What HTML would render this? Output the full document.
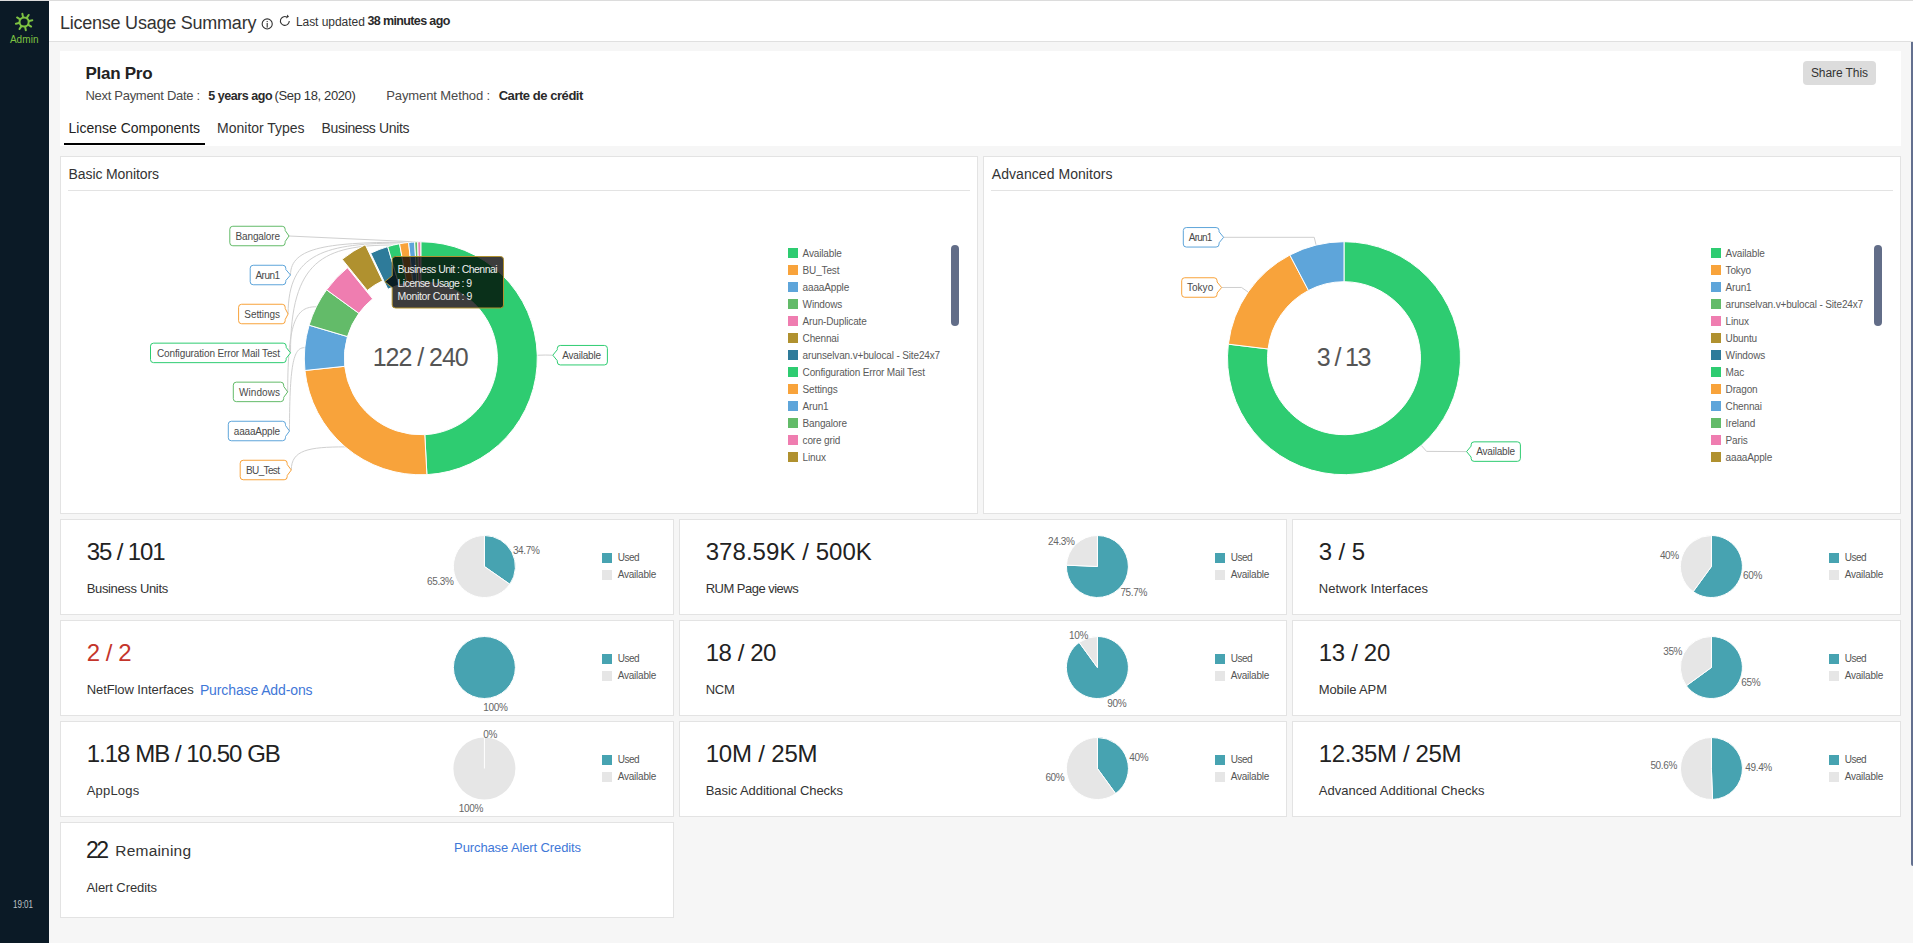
<!DOCTYPE html><html><head><meta charset="utf-8"><title>License Usage Summary</title><style>
*{margin:0;padding:0;box-sizing:border-box}
html,body{width:1913px;height:943px;overflow:hidden;background:#f6f6f6;font-family:"Liberation Sans",sans-serif}
.t{position:absolute;white-space:nowrap;line-height:1}
.a{position:absolute}
.card{position:absolute;background:#fff;border:1px solid #e3e3e3}
svg{position:absolute;left:0;top:0}
</style></head><body>
<div class="a" style="left:0;top:0;width:1913px;height:1px;background:#dcdcdc"></div>
<div class="a" style="left:0;top:1px;width:49px;height:942px;background:#0b1a26"></div>
<div class="a" style="left:49px;top:1px;width:1864px;height:40px;background:#fff"></div>
<div class="a" style="left:49px;top:41px;width:1864px;height:1px;background:#e0e0e0"></div>
<div class="a" style="left:1911px;top:42px;width:2px;height:824px;background:#63708f;border-radius:0 0 0 2px"></div>
<svg width="49" height="60" style="left:0;top:0"><g transform="translate(24.1,22)"><line x1="-1.08" y1="-5.09" x2="-1.75" y2="-8.22" stroke="#7dc242" stroke-width="2.0" stroke-linecap="round"/><line x1="2.83" y1="-4.36" x2="4.57" y2="-7.04" stroke="#7dc242" stroke-width="2.0" stroke-linecap="round"/><line x1="5.09" y1="-1.08" x2="8.22" y2="-1.75" stroke="#7dc242" stroke-width="2.0" stroke-linecap="round"/><line x1="4.36" y1="2.83" x2="7.04" y2="4.57" stroke="#7dc242" stroke-width="2.0" stroke-linecap="round"/><line x1="1.08" y1="5.09" x2="1.75" y2="8.22" stroke="#7dc242" stroke-width="2.0" stroke-linecap="round"/><line x1="-2.83" y1="4.36" x2="-4.57" y2="7.04" stroke="#7dc242" stroke-width="2.0" stroke-linecap="round"/><line x1="-5.09" y1="1.08" x2="-8.22" y2="1.75" stroke="#7dc242" stroke-width="2.0" stroke-linecap="round"/><line x1="-4.36" y1="-2.83" x2="-7.04" y2="-4.57" stroke="#7dc242" stroke-width="2.0" stroke-linecap="round"/><circle r="4.6" fill="none" stroke="#7dc242" stroke-width="2.0"/></g></svg>
<div class="t" style="left:9.90px;top:35.24px;font-size:10px;color:#7dc242;letter-spacing:0.062px;">Admin</div>
<div class="t" style="left:13.10px;top:900.24px;font-size:10px;color:#bfc3c7;transform:scaleX(0.8);transform-origin:0 0;">19:01</div>
<div class="t" style="left:59.90px;top:14.16px;font-size:18px;color:#333;letter-spacing:-0.228px;">License Usage Summary</div>
<svg width="60" height="42" style="left:255px;top:0"><circle cx="12.2" cy="23.9" r="5.05" fill="none" stroke="#333" stroke-width="1.1"/><rect x="11.65" y="23.0" width="1.1" height="4.6" fill="#333"/><rect x="11.65" y="21.0" width="1.1" height="1.1" fill="#333"/><path d="M31.7,16.9 A4.45,4.45 0 1 0 34.3,21.1" fill="none" stroke="#333" stroke-width="1.1"/><path d="M32.4,14.6 L34.0,16.7 L31.0,18.5 Z" fill="#333"/></svg>
<div class="t" style="left:295.90px;top:16.04px;font-size:12px;color:#333;letter-spacing:-0.038px;">Last updated</div>
<div class="t" style="left:367.40px;top:15.42px;font-size:12.5px;color:#2a2a2a;font-weight:700;letter-spacing:-0.623px;">38 minutes ago</div>
<div class="a" style="left:60px;top:51px;width:1841px;height:95px;background:#fff"></div>
<div class="t" style="left:85.40px;top:64.91px;font-size:17px;color:#222;font-weight:700;letter-spacing:-0.248px;">Plan Pro</div>
<div class="t" style="left:85.40px;top:89.40px;font-size:13px;color:#4a4a4a;letter-spacing:-0.285px;">Next Payment Date :</div>
<div class="t" style="left:208.30px;top:89.62px;font-size:12.5px;color:#2a2a2a;font-weight:700;letter-spacing:-0.451px;">5 years ago</div>
<div class="t" style="left:274.50px;top:89.40px;font-size:13px;color:#333;letter-spacing:-0.361px;">(Sep 18, 2020)</div>
<div class="t" style="left:386.20px;top:89.40px;font-size:13px;color:#4a4a4a;letter-spacing:-0.100px;">Payment Method :</div>
<div class="t" style="left:498.70px;top:89.00px;font-size:13px;color:#2a2a2a;font-weight:700;letter-spacing:-0.455px;">Carte de crédit</div>
<div class="a" style="left:1803px;top:61px;width:73px;height:24px;background:#dcdcdc;border-radius:4px"></div>
<div class="t" style="left:1810.90px;top:67.44px;font-size:12px;color:#333;letter-spacing:-0.071px;">Share This</div>
<div class="t" style="left:68.50px;top:121.05px;font-size:14px;color:#222;">License Components</div>
<div class="t" style="left:217.10px;top:121.05px;font-size:14px;color:#333;letter-spacing:-0.012px;">Monitor Types</div>
<div class="t" style="left:321.60px;top:121.05px;font-size:14px;color:#333;letter-spacing:-0.362px;">Business Units</div>
<div class="a" style="left:64px;top:143px;width:141px;height:2px;background:#000"></div>
<div class="card" style="left:60px;top:156px;width:918px;height:358px"></div>
<div class="card" style="left:983px;top:156px;width:918px;height:358px"></div>
<div class="t" style="left:68.60px;top:167.05px;font-size:14px;color:#333;letter-spacing:-0.111px;">Basic Monitors</div>
<div class="t" style="left:991.80px;top:167.05px;font-size:14px;color:#333;letter-spacing:0.054px;">Advanced Monitors</div>
<div class="a" style="left:68px;top:190px;width:902px;height:1px;background:#e3e3e3"></div>
<div class="a" style="left:991px;top:190px;width:902px;height:1px;background:#e3e3e3"></div>
<svg width="1913" height="943" style="left:0;top:0"><path d="M289.00,236.00 L416.23,241.89" fill="none" stroke="#d0d0d0" stroke-width="1"/><path d="M290.50,275.00 C290.50,246.76 329.27,242.16 411.66,242.16" fill="none" stroke="#d0d0d0" stroke-width="1"/><path d="M288.10,314.00 C288.10,252.94 325.21,243.01 404.08,243.01" fill="none" stroke="#d0d0d0" stroke-width="1"/><path d="M290.50,352.90 C290.50,260.12 323.49,245.02 393.60,245.02" fill="none" stroke="#d0d0d0" stroke-width="1"/><path d="M287.70,391.90 C287.70,318.69 296.86,306.77 316.31,306.77" fill="none" stroke="#d0d0d0" stroke-width="1"/><path d="M289.50,431.00 C289.50,359.31 294.39,347.64 304.79,347.64" fill="none" stroke="#d0d0d0" stroke-width="1"/><path d="M291.30,470.00 C291.30,450.12 308.53,446.89 345.14,446.89" fill="none" stroke="#d0d0d0" stroke-width="1"/><path d="M552.50,355.20 L545.26,355.04 L537.26,355.25" fill="none" stroke="#cfcfcf" stroke-width="1"/><path d="M420.80,241.80A116.5,116.5 0 0 1 426.90,474.64L424.80,434.70A76.5,76.5 0 0 0 420.80,281.80Z" fill="#2ecc71" stroke="#fff" stroke-width="1" stroke-linejoin="round"/><path d="M426.90,474.64A116.5,116.5 0 0 1 304.94,370.48L344.72,366.30A76.5,76.5 0 0 0 424.80,434.70Z" fill="#f8a33b" stroke="#fff" stroke-width="1" stroke-linejoin="round"/><path d="M304.94,370.48A116.5,116.5 0 0 1 309.10,325.21L347.45,336.57A76.5,76.5 0 0 0 344.72,366.30Z" fill="#5ea5da" stroke="#fff" stroke-width="1" stroke-linejoin="round"/><path d="M309.10,325.21A116.5,116.5 0 0 1 326.55,289.82L358.91,313.33A76.5,76.5 0 0 0 347.45,336.57Z" fill="#63bb69" stroke="#fff" stroke-width="1" stroke-linejoin="round"/><path d="M326.55,289.82A116.5,116.5 0 0 1 347.48,267.76L372.66,298.85A76.5,76.5 0 0 0 358.91,313.33Z" fill="#ef7db0" stroke="#fff" stroke-width="1" stroke-linejoin="round"/><path d="M347.48,267.76A116.5,116.5 0 0 1 370.65,253.15L387.87,289.25A76.5,76.5 0 0 0 372.66,298.85Z" fill="#b0912f" stroke="#fff" stroke-width="1" stroke-linejoin="round" transform="translate(-5.34,-8.46)"/><path d="M370.65,253.15A116.5,116.5 0 0 1 387.71,246.60L399.07,284.95A76.5,76.5 0 0 0 387.87,289.25Z" fill="#2e7b9a" stroke="#fff" stroke-width="1" stroke-linejoin="round"/><path d="M387.71,246.60A116.5,116.5 0 0 1 399.57,243.75L406.86,283.08A76.5,76.5 0 0 0 399.07,284.95Z" fill="#2ecc71" stroke="#fff" stroke-width="1" stroke-linejoin="round"/><path d="M399.57,243.75A116.5,116.5 0 0 1 408.62,242.44L412.80,282.22A76.5,76.5 0 0 0 406.86,283.08Z" fill="#f8a33b" stroke="#fff" stroke-width="1" stroke-linejoin="round"/><path d="M408.62,242.44A116.5,116.5 0 0 1 414.70,241.96L416.80,281.90A76.5,76.5 0 0 0 412.80,282.22Z" fill="#5ea5da" stroke="#fff" stroke-width="1" stroke-linejoin="round"/><path d="M414.70,241.96A116.5,116.5 0 0 1 417.75,241.84L418.80,281.83A76.5,76.5 0 0 0 416.80,281.90Z" fill="#63bb69" stroke="#fff" stroke-width="1" stroke-linejoin="round"/><path d="M417.75,241.84A116.5,116.5 0 0 1 420.80,241.80L420.80,281.80A76.5,76.5 0 0 0 418.80,281.83Z" fill="#ef7db0" stroke="#fff" stroke-width="1" stroke-linejoin="round"/><path d="M232.8,226.25 L282.2,226.25 Q285.2,226.25 285.2,229.25 L285.2,230.5 L289.0,236 L285.2,241.5 L285.2,242.75 Q285.2,245.75 282.2,245.75 L232.8,245.75 Q229.8,245.75 229.8,242.75 L229.8,229.25 Q229.8,226.25 232.8,226.25 Z" fill="#fff" stroke="#63bb69" stroke-width="1"/><path d="M253.2,265.25 L282.8,265.25 Q285.8,265.25 285.8,268.25 L285.8,269.5 L290.5,275 L285.8,280.5 L285.8,281.75 Q285.8,284.75 282.8,284.75 L253.2,284.75 Q250.2,284.75 250.2,281.75 L250.2,268.25 Q250.2,265.25 253.2,265.25 Z" fill="#fff" stroke="#5ea5da" stroke-width="1"/><path d="M241.6,304.25 L282.2,304.25 Q285.2,304.25 285.2,307.25 L285.2,308.5 L288.1,314 L285.2,319.5 L285.2,320.75 Q285.2,323.75 282.2,323.75 L241.6,323.75 Q238.6,323.75 238.6,320.75 L238.6,307.25 Q238.6,304.25 241.6,304.25 Z" fill="#fff" stroke="#f8a33b" stroke-width="1"/><path d="M153.5,343.15 L283.2,343.15 Q286.2,343.15 286.2,346.15 L286.2,347.4 L290.5,352.9 L286.2,358.4 L286.2,359.65 Q286.2,362.65 283.2,362.65 L153.5,362.65 Q150.5,362.65 150.5,359.65 L150.5,346.15 Q150.5,343.15 153.5,343.15 Z" fill="#fff" stroke="#2ecc71" stroke-width="1"/><path d="M236.3,382.15 L280.7,382.15 Q283.7,382.15 283.7,385.15 L283.7,386.4 L287.7,391.9 L283.7,397.4 L283.7,398.65 Q283.7,401.65 280.7,401.65 L236.3,401.65 Q233.3,401.65 233.3,398.65 L233.3,385.15 Q233.3,382.15 236.3,382.15 Z" fill="#fff" stroke="#63bb69" stroke-width="1"/><path d="M231.3,421.25 L282.5,421.25 Q285.5,421.25 285.5,424.25 L285.5,425.5 L289.5,431 L285.5,436.5 L285.5,437.75 Q285.5,440.75 282.5,440.75 L231.3,440.75 Q228.3,440.75 228.3,437.75 L228.3,424.25 Q228.3,421.25 231.3,421.25 Z" fill="#fff" stroke="#5ea5da" stroke-width="1"/><path d="M243.2,460.25 L284.2,460.25 Q287.2,460.25 287.2,463.25 L287.2,464.5 L291.3,470 L287.2,475.5 L287.2,476.75 Q287.2,479.75 284.2,479.75 L243.2,479.75 Q240.2,479.75 240.2,476.75 L240.2,463.25 Q240.2,460.25 243.2,460.25 Z" fill="#fff" stroke="#f8a33b" stroke-width="1"/><path d="M560.3,345.45 L604.4,345.45 Q607.4,345.45 607.4,348.45 L607.4,361.95 Q607.4,364.95 604.4,364.95 L560.3,364.95 Q557.3,364.95 557.3,361.95 L557.3,360.7 L552.8,355.2 L557.3,349.7 L557.3,348.45 Q557.3,345.45 560.3,345.45 Z" fill="#fff" stroke="#2ecc71" stroke-width="1"/><path d="M1223.30,237.30 L1314.21,237.32 L1316.12,245.09" fill="none" stroke="#cfcfcf" stroke-width="1"/><path d="M1221.40,287.50 L1241.54,287.48 L1248.12,292.02" fill="none" stroke="#cfcfcf" stroke-width="1"/><path d="M1466.60,451.60 L1426.56,451.39 L1421.25,445.40" fill="none" stroke="#cfcfcf" stroke-width="1"/><path d="M1344.00,241.70A116.5,116.5 0 1 1 1228.35,344.16L1268.06,348.98A76.5,76.5 0 1 0 1344.00,281.70Z" fill="#2ecc71" stroke="#fff" stroke-width="1" stroke-linejoin="round"/><path d="M1228.35,344.16A116.5,116.5 0 0 1 1289.86,255.04L1308.45,290.46A76.5,76.5 0 0 0 1268.06,348.98Z" fill="#f8a33b" stroke="#fff" stroke-width="1" stroke-linejoin="round"/><path d="M1289.86,255.04A116.5,116.5 0 0 1 1344.00,241.70L1344.00,281.70A76.5,76.5 0 0 0 1308.45,290.46Z" fill="#5ea5da" stroke="#fff" stroke-width="1" stroke-linejoin="round"/><path d="M1186.3,227.55 L1216.1,227.55 Q1219.1,227.55 1219.1,230.55 L1219.1,231.8 L1223.6,237.3 L1219.1,242.8 L1219.1,244.05 Q1219.1,247.05 1216.1,247.05 L1186.3,247.05 Q1183.3,247.05 1183.3,244.05 L1183.3,230.55 Q1183.3,227.55 1186.3,227.55 Z" fill="#fff" stroke="#5ea5da" stroke-width="1"/><path d="M1184.7,277.75 L1214.1,277.75 Q1217.1,277.75 1217.1,280.75 L1217.1,282.0 L1221.6,287.5 L1217.1,293.0 L1217.1,294.25 Q1217.1,297.25 1214.1,297.25 L1184.7,297.25 Q1181.7,297.25 1181.7,294.25 L1181.7,280.75 Q1181.7,277.75 1184.7,277.75 Z" fill="#fff" stroke="#f8a33b" stroke-width="1"/><path d="M1474.1,441.85 L1517.4,441.85 Q1520.4,441.85 1520.4,444.85 L1520.4,458.35 Q1520.4,461.35 1517.4,461.35 L1474.1,461.35 Q1471.1,461.35 1471.1,458.35 L1471.1,457.1 L1466.6,451.6 L1471.1,446.1 L1471.1,444.85 Q1471.1,441.85 1474.1,441.85 Z" fill="#fff" stroke="#2ecc71" stroke-width="1"/><path d="M395.7,256.5 L500.5,256.5 Q503.5,256.5 503.5,259.5 L503.5,305 Q503.5,308 500.5,308 L395.7,308 Q392.2,308 392.2,305 L392.2,287.6 L384.8,281.7 L392.2,275.8 L392.2,259.5 Q392.2,256.5 395.7,256.5 Z" fill="rgba(0,0,0,0.765)" stroke="#b0912f" stroke-width="1"/></svg>
<div class="t" style="left:235.60px;top:231.63px;font-size:10px;color:#4a4a4a;letter-spacing:-0.150px;">Bangalore</div>
<div class="t" style="left:255.50px;top:270.64px;font-size:10px;color:#4a4a4a;letter-spacing:-0.550px;">Arun1</div>
<div class="t" style="left:244.30px;top:309.64px;font-size:10px;color:#4a4a4a;letter-spacing:-0.064px;">Settings</div>
<div class="t" style="left:157.00px;top:348.54px;font-size:10px;color:#4a4a4a;letter-spacing:-0.127px;">Configuration Error Mail Test</div>
<div class="t" style="left:239.10px;top:387.54px;font-size:10px;color:#4a4a4a;letter-spacing:0.058px;">Windows</div>
<div class="t" style="left:233.80px;top:426.64px;font-size:10px;color:#4a4a4a;letter-spacing:-0.200px;">aaaaApple</div>
<div class="t" style="left:246.00px;top:465.64px;font-size:10px;color:#4a4a4a;letter-spacing:-0.633px;">BU_Test</div>
<div class="t" style="left:562.30px;top:350.84px;font-size:10px;color:#4a4a4a;letter-spacing:-0.213px;">Available</div>
<div class="t" style="left:1188.80px;top:232.94px;font-size:10px;color:#4a4a4a;letter-spacing:-0.800px;">Arun1</div>
<div class="t" style="left:1186.90px;top:283.14px;font-size:10px;color:#4a4a4a;letter-spacing:0.050px;">Tokyo</div>
<div class="t" style="left:1476.30px;top:447.24px;font-size:10px;color:#4a4a4a;letter-spacing:-0.213px;">Available</div>
<div class="t" style="left:372.70px;top:344.94px;font-size:25px;color:#555;letter-spacing:-1.031px;">122 / 240</div>
<div class="t" style="left:1316.70px;top:344.94px;font-size:25px;color:#555;letter-spacing:-1.580px;">3 / 13</div>
<div class="t" style="left:397.60px;top:263.61px;font-size:10.5px;color:#eee;letter-spacing:-0.549px;">Business Unit : Chennai</div>
<div class="t" style="left:397.60px;top:277.61px;font-size:10.5px;color:#eee;letter-spacing:-0.597px;">License Usage : 9</div>
<div class="t" style="left:397.60px;top:290.51px;font-size:10.5px;color:#eee;letter-spacing:-0.358px;">Monitor Count : 9</div>
<div class="a" style="left:788px;top:248px;width:10px;height:10px;background:#2ecc71"></div>
<div class="t" style="left:802.60px;top:249.13px;font-size:10px;color:#5a5a5a;letter-spacing:-0.15px;">Available</div>
<div class="a" style="left:788px;top:265px;width:10px;height:10px;background:#f8a33b"></div>
<div class="t" style="left:802.60px;top:266.14px;font-size:10px;color:#5a5a5a;letter-spacing:-0.15px;">BU_Test</div>
<div class="a" style="left:788px;top:282px;width:10px;height:10px;background:#5ea5da"></div>
<div class="t" style="left:802.60px;top:283.14px;font-size:10px;color:#5a5a5a;letter-spacing:-0.15px;">aaaaApple</div>
<div class="a" style="left:788px;top:299px;width:10px;height:10px;background:#63bb69"></div>
<div class="t" style="left:802.60px;top:300.14px;font-size:10px;color:#5a5a5a;letter-spacing:-0.15px;">Windows</div>
<div class="a" style="left:788px;top:316px;width:10px;height:10px;background:#ef7db0"></div>
<div class="t" style="left:802.60px;top:317.14px;font-size:10px;color:#5a5a5a;letter-spacing:-0.15px;">Arun-Duplicate</div>
<div class="a" style="left:788px;top:333px;width:10px;height:10px;background:#b0912f"></div>
<div class="t" style="left:802.60px;top:334.14px;font-size:10px;color:#5a5a5a;letter-spacing:-0.15px;">Chennai</div>
<div class="a" style="left:788px;top:350px;width:10px;height:10px;background:#2e7b9a"></div>
<div class="t" style="left:802.60px;top:351.14px;font-size:10px;color:#5a5a5a;letter-spacing:-0.15px;">arunselvan.v+bulocal - Site24x7</div>
<div class="a" style="left:788px;top:367px;width:10px;height:10px;background:#2ecc71"></div>
<div class="t" style="left:802.60px;top:368.14px;font-size:10px;color:#5a5a5a;letter-spacing:-0.15px;">Configuration Error Mail Test</div>
<div class="a" style="left:788px;top:384px;width:10px;height:10px;background:#f8a33b"></div>
<div class="t" style="left:802.60px;top:385.14px;font-size:10px;color:#5a5a5a;letter-spacing:-0.15px;">Settings</div>
<div class="a" style="left:788px;top:401px;width:10px;height:10px;background:#5ea5da"></div>
<div class="t" style="left:802.60px;top:402.14px;font-size:10px;color:#5a5a5a;letter-spacing:-0.15px;">Arun1</div>
<div class="a" style="left:788px;top:418px;width:10px;height:10px;background:#63bb69"></div>
<div class="t" style="left:802.60px;top:419.14px;font-size:10px;color:#5a5a5a;letter-spacing:-0.15px;">Bangalore</div>
<div class="a" style="left:788px;top:435px;width:10px;height:10px;background:#ef7db0"></div>
<div class="t" style="left:802.60px;top:436.14px;font-size:10px;color:#5a5a5a;letter-spacing:-0.15px;">core grid</div>
<div class="a" style="left:788px;top:452px;width:10px;height:10px;background:#b0912f"></div>
<div class="t" style="left:802.60px;top:453.14px;font-size:10px;color:#5a5a5a;letter-spacing:-0.15px;">Linux</div>
<div class="a" style="left:951px;top:245px;width:8px;height:81px;background:#626d88;border-radius:4px"></div>
<div class="a" style="left:1711px;top:248px;width:10px;height:10px;background:#2ecc71"></div>
<div class="t" style="left:1725.60px;top:249.13px;font-size:10px;color:#5a5a5a;letter-spacing:-0.15px;">Available</div>
<div class="a" style="left:1711px;top:265px;width:10px;height:10px;background:#f8a33b"></div>
<div class="t" style="left:1725.60px;top:266.14px;font-size:10px;color:#5a5a5a;letter-spacing:-0.15px;">Tokyo</div>
<div class="a" style="left:1711px;top:282px;width:10px;height:10px;background:#5ea5da"></div>
<div class="t" style="left:1725.60px;top:283.14px;font-size:10px;color:#5a5a5a;letter-spacing:-0.15px;">Arun1</div>
<div class="a" style="left:1711px;top:299px;width:10px;height:10px;background:#63bb69"></div>
<div class="t" style="left:1725.60px;top:300.14px;font-size:10px;color:#5a5a5a;letter-spacing:-0.15px;">arunselvan.v+bulocal - Site24x7</div>
<div class="a" style="left:1711px;top:316px;width:10px;height:10px;background:#ef7db0"></div>
<div class="t" style="left:1725.60px;top:317.14px;font-size:10px;color:#5a5a5a;letter-spacing:-0.15px;">Linux</div>
<div class="a" style="left:1711px;top:333px;width:10px;height:10px;background:#b0912f"></div>
<div class="t" style="left:1725.60px;top:334.14px;font-size:10px;color:#5a5a5a;letter-spacing:-0.15px;">Ubuntu</div>
<div class="a" style="left:1711px;top:350px;width:10px;height:10px;background:#2e7b9a"></div>
<div class="t" style="left:1725.60px;top:351.14px;font-size:10px;color:#5a5a5a;letter-spacing:-0.15px;">Windows</div>
<div class="a" style="left:1711px;top:367px;width:10px;height:10px;background:#2ecc71"></div>
<div class="t" style="left:1725.60px;top:368.14px;font-size:10px;color:#5a5a5a;letter-spacing:-0.15px;">Mac</div>
<div class="a" style="left:1711px;top:384px;width:10px;height:10px;background:#f8a33b"></div>
<div class="t" style="left:1725.60px;top:385.14px;font-size:10px;color:#5a5a5a;letter-spacing:-0.15px;">Dragon</div>
<div class="a" style="left:1711px;top:401px;width:10px;height:10px;background:#5ea5da"></div>
<div class="t" style="left:1725.60px;top:402.14px;font-size:10px;color:#5a5a5a;letter-spacing:-0.15px;">Chennai</div>
<div class="a" style="left:1711px;top:418px;width:10px;height:10px;background:#63bb69"></div>
<div class="t" style="left:1725.60px;top:419.14px;font-size:10px;color:#5a5a5a;letter-spacing:-0.15px;">Ireland</div>
<div class="a" style="left:1711px;top:435px;width:10px;height:10px;background:#ef7db0"></div>
<div class="t" style="left:1725.60px;top:436.14px;font-size:10px;color:#5a5a5a;letter-spacing:-0.15px;">Paris</div>
<div class="a" style="left:1711px;top:452px;width:10px;height:10px;background:#b0912f"></div>
<div class="t" style="left:1725.60px;top:453.14px;font-size:10px;color:#5a5a5a;letter-spacing:-0.15px;">aaaaApple</div>
<div class="a" style="left:1874px;top:245px;width:8px;height:81px;background:#626d88;border-radius:4px"></div>
<div class="card" style="left:60px;top:519px;width:614px;height:96px"></div>
<div class="a" style="left:602px;top:553px;width:10px;height:10px;background:#47a3b1"></div>
<div class="a" style="left:602px;top:570px;width:10px;height:10px;background:#e6e6e6"></div>
<div class="card" style="left:679px;top:519px;width:608px;height:96px"></div>
<div class="a" style="left:1215px;top:553px;width:10px;height:10px;background:#47a3b1"></div>
<div class="a" style="left:1215px;top:570px;width:10px;height:10px;background:#e6e6e6"></div>
<div class="card" style="left:1292px;top:519px;width:609px;height:96px"></div>
<div class="a" style="left:1829px;top:553px;width:10px;height:10px;background:#47a3b1"></div>
<div class="a" style="left:1829px;top:570px;width:10px;height:10px;background:#e6e6e6"></div>
<div class="card" style="left:60px;top:620px;width:614px;height:96px"></div>
<div class="a" style="left:602px;top:654px;width:10px;height:10px;background:#47a3b1"></div>
<div class="a" style="left:602px;top:671px;width:10px;height:10px;background:#e6e6e6"></div>
<div class="card" style="left:679px;top:620px;width:608px;height:96px"></div>
<div class="a" style="left:1215px;top:654px;width:10px;height:10px;background:#47a3b1"></div>
<div class="a" style="left:1215px;top:671px;width:10px;height:10px;background:#e6e6e6"></div>
<div class="card" style="left:1292px;top:620px;width:609px;height:96px"></div>
<div class="a" style="left:1829px;top:654px;width:10px;height:10px;background:#47a3b1"></div>
<div class="a" style="left:1829px;top:671px;width:10px;height:10px;background:#e6e6e6"></div>
<div class="card" style="left:60px;top:721px;width:614px;height:96px"></div>
<div class="a" style="left:602px;top:755px;width:10px;height:10px;background:#47a3b1"></div>
<div class="a" style="left:602px;top:772px;width:10px;height:10px;background:#e6e6e6"></div>
<div class="card" style="left:679px;top:721px;width:608px;height:96px"></div>
<div class="a" style="left:1215px;top:755px;width:10px;height:10px;background:#47a3b1"></div>
<div class="a" style="left:1215px;top:772px;width:10px;height:10px;background:#e6e6e6"></div>
<div class="card" style="left:1292px;top:721px;width:609px;height:96px"></div>
<div class="a" style="left:1829px;top:755px;width:10px;height:10px;background:#47a3b1"></div>
<div class="a" style="left:1829px;top:772px;width:10px;height:10px;background:#e6e6e6"></div>
<svg width="1913" height="943" style="left:0;top:0"><path d="M484.40,566.50L484.40,535.50A31,31 0 0 1 509.82,584.25Z" fill="#47a3b1" stroke="#fff" stroke-width="1" stroke-linejoin="round"/><path d="M484.40,566.50L509.82,584.25A31,31 0 1 1 484.40,535.50Z" fill="#e6e6e6" stroke="#fff" stroke-width="1" stroke-linejoin="round"/><path d="M1097.40,566.50L1097.40,535.50A31,31 0 1 1 1066.43,565.14Z" fill="#47a3b1" stroke="#fff" stroke-width="1" stroke-linejoin="round"/><path d="M1097.40,566.50L1066.43,565.14A31,31 0 0 1 1097.40,535.50Z" fill="#e6e6e6" stroke="#fff" stroke-width="1" stroke-linejoin="round"/><path d="M1711.40,566.50L1711.40,535.50A31,31 0 1 1 1693.18,591.58Z" fill="#47a3b1" stroke="#fff" stroke-width="1" stroke-linejoin="round"/><path d="M1711.40,566.50L1693.18,591.58A31,31 0 0 1 1711.40,535.50Z" fill="#e6e6e6" stroke="#fff" stroke-width="1" stroke-linejoin="round"/><circle cx="484.4" cy="667.5" r="31" fill="#47a3b1" stroke="#fff" stroke-width="1"/><path d="M1097.40,667.50L1097.40,636.50A31,31 0 1 1 1079.18,642.42Z" fill="#47a3b1" stroke="#fff" stroke-width="1" stroke-linejoin="round"/><path d="M1097.40,667.50L1079.18,642.42A31,31 0 0 1 1097.40,636.50Z" fill="#e6e6e6" stroke="#fff" stroke-width="1" stroke-linejoin="round"/><path d="M1711.40,667.50L1711.40,636.50A31,31 0 1 1 1686.32,685.72Z" fill="#47a3b1" stroke="#fff" stroke-width="1" stroke-linejoin="round"/><path d="M1711.40,667.50L1686.32,685.72A31,31 0 0 1 1711.40,636.50Z" fill="#e6e6e6" stroke="#fff" stroke-width="1" stroke-linejoin="round"/><circle cx="484.4" cy="768.5" r="31" fill="#e6e6e6"/><line x1="484.4" y1="768.5" x2="484.4" y2="737.5" stroke="#fff" stroke-width="1"/><path d="M1097.40,768.50L1097.40,737.50A31,31 0 0 1 1115.62,793.58Z" fill="#47a3b1" stroke="#fff" stroke-width="1" stroke-linejoin="round"/><path d="M1097.40,768.50L1115.62,793.58A31,31 0 1 1 1097.40,737.50Z" fill="#e6e6e6" stroke="#fff" stroke-width="1" stroke-linejoin="round"/><path d="M1711.40,768.50L1711.40,737.50A31,31 0 0 1 1712.57,799.48Z" fill="#47a3b1" stroke="#fff" stroke-width="1" stroke-linejoin="round"/><path d="M1711.40,768.50L1712.57,799.48A31,31 0 1 1 1711.40,737.50Z" fill="#e6e6e6" stroke="#fff" stroke-width="1" stroke-linejoin="round"/></svg>
<div class="t" style="left:86.70px;top:539.88px;font-size:24px;color:#222;letter-spacing:-1.109px;">35 / 101</div>
<div class="t" style="left:86.70px;top:582.20px;font-size:13px;color:#333;letter-spacing:-0.346px;">Business Units</div>
<div class="t" style="left:512.90px;top:545.93px;font-size:10px;color:#666;letter-spacing:-0.35px;">34.7%</div>
<div class="t" style="left:427.00px;top:576.63px;font-size:10px;color:#666;letter-spacing:-0.35px;">65.3%</div>
<div class="t" style="left:617.70px;top:552.74px;font-size:10px;color:#555;letter-spacing:-0.450px;">Used</div>
<div class="t" style="left:617.70px;top:569.74px;font-size:10px;color:#555;letter-spacing:-0.225px;">Available</div>
<div class="t" style="left:705.70px;top:539.88px;font-size:24px;color:#222;letter-spacing:0.055px;">378.59K / 500K</div>
<div class="t" style="left:705.70px;top:582.20px;font-size:13px;color:#333;letter-spacing:-0.516px;">RUM Page views</div>
<div class="t" style="left:1048.00px;top:536.74px;font-size:10px;color:#666;letter-spacing:-0.35px;">24.3%</div>
<div class="t" style="left:1120.40px;top:587.74px;font-size:10px;color:#666;letter-spacing:-0.35px;">75.7%</div>
<div class="t" style="left:1230.70px;top:552.74px;font-size:10px;color:#555;letter-spacing:-0.450px;">Used</div>
<div class="t" style="left:1230.70px;top:569.74px;font-size:10px;color:#555;letter-spacing:-0.225px;">Available</div>
<div class="t" style="left:1318.70px;top:539.88px;font-size:24px;color:#222;letter-spacing:-0.095px;">3 / 5</div>
<div class="t" style="left:1318.70px;top:582.20px;font-size:13px;color:#333;letter-spacing:0.056px;">Network Interfaces</div>
<div class="t" style="left:1659.90px;top:550.74px;font-size:10px;color:#666;letter-spacing:-0.35px;">40%</div>
<div class="t" style="left:1743.00px;top:571.13px;font-size:10px;color:#666;letter-spacing:-0.35px;">60%</div>
<div class="t" style="left:1844.70px;top:552.74px;font-size:10px;color:#555;letter-spacing:-0.450px;">Used</div>
<div class="t" style="left:1844.70px;top:569.74px;font-size:10px;color:#555;letter-spacing:-0.225px;">Available</div>
<div class="t" style="left:86.70px;top:640.88px;font-size:24px;color:#c4352b;letter-spacing:-0.445px;">2 / 2</div>
<div class="t" style="left:86.70px;top:683.20px;font-size:13px;color:#333;letter-spacing:-0.080px;">NetFlow Interfaces</div>
<div class="t" style="left:483.30px;top:702.84px;font-size:10px;color:#666;letter-spacing:-0.35px;">100%</div>
<div class="t" style="left:617.70px;top:653.74px;font-size:10px;color:#555;letter-spacing:-0.450px;">Used</div>
<div class="t" style="left:617.70px;top:670.74px;font-size:10px;color:#555;letter-spacing:-0.225px;">Available</div>
<div class="t" style="left:705.70px;top:640.88px;font-size:24px;color:#222;letter-spacing:-0.440px;">18 / 20</div>
<div class="t" style="left:705.70px;top:683.20px;font-size:13px;color:#333;letter-spacing:-0.287px;">NCM</div>
<div class="t" style="left:1069.00px;top:631.13px;font-size:10px;color:#666;letter-spacing:-0.35px;">10%</div>
<div class="t" style="left:1107.30px;top:699.03px;font-size:10px;color:#666;letter-spacing:-0.35px;">90%</div>
<div class="t" style="left:1230.70px;top:653.74px;font-size:10px;color:#555;letter-spacing:-0.450px;">Used</div>
<div class="t" style="left:1230.70px;top:670.74px;font-size:10px;color:#555;letter-spacing:-0.225px;">Available</div>
<div class="t" style="left:1318.70px;top:640.88px;font-size:24px;color:#222;letter-spacing:-0.307px;">13 / 20</div>
<div class="t" style="left:1318.70px;top:683.20px;font-size:13px;color:#333;letter-spacing:-0.117px;">Mobile APM</div>
<div class="t" style="left:1663.20px;top:647.24px;font-size:10px;color:#666;letter-spacing:-0.35px;">35%</div>
<div class="t" style="left:1741.30px;top:677.74px;font-size:10px;color:#666;letter-spacing:-0.35px;">65%</div>
<div class="t" style="left:1844.70px;top:653.74px;font-size:10px;color:#555;letter-spacing:-0.450px;">Used</div>
<div class="t" style="left:1844.70px;top:670.74px;font-size:10px;color:#555;letter-spacing:-0.225px;">Available</div>
<div class="t" style="left:86.70px;top:741.88px;font-size:24px;color:#222;letter-spacing:-0.979px;">1.18 MB / 10.50 GB</div>
<div class="t" style="left:86.70px;top:784.20px;font-size:13px;color:#333;letter-spacing:0.192px;">AppLogs</div>
<div class="t" style="left:483.30px;top:729.84px;font-size:10px;color:#666;letter-spacing:-0.35px;">0%</div>
<div class="t" style="left:458.80px;top:804.13px;font-size:10px;color:#666;letter-spacing:-0.35px;">100%</div>
<div class="t" style="left:617.70px;top:754.74px;font-size:10px;color:#555;letter-spacing:-0.450px;">Used</div>
<div class="t" style="left:617.70px;top:771.74px;font-size:10px;color:#555;letter-spacing:-0.225px;">Available</div>
<div class="t" style="left:705.70px;top:741.88px;font-size:24px;color:#222;letter-spacing:-0.187px;">10M / 25M</div>
<div class="t" style="left:705.70px;top:784.20px;font-size:13px;color:#333;letter-spacing:-0.067px;">Basic Additional Checks</div>
<div class="t" style="left:1129.30px;top:753.24px;font-size:10px;color:#666;letter-spacing:-0.35px;">40%</div>
<div class="t" style="left:1045.40px;top:773.03px;font-size:10px;color:#666;letter-spacing:-0.35px;">60%</div>
<div class="t" style="left:1230.70px;top:754.74px;font-size:10px;color:#555;letter-spacing:-0.450px;">Used</div>
<div class="t" style="left:1230.70px;top:771.74px;font-size:10px;color:#555;letter-spacing:-0.225px;">Available</div>
<div class="t" style="left:1318.70px;top:741.88px;font-size:24px;color:#222;letter-spacing:-0.360px;">12.35M / 25M</div>
<div class="t" style="left:1318.70px;top:784.20px;font-size:13px;color:#333;letter-spacing:0.041px;">Advanced Additional Checks</div>
<div class="t" style="left:1650.40px;top:761.34px;font-size:10px;color:#666;letter-spacing:-0.35px;">50.6%</div>
<div class="t" style="left:1745.30px;top:762.93px;font-size:10px;color:#666;letter-spacing:-0.35px;">49.4%</div>
<div class="t" style="left:1844.70px;top:754.74px;font-size:10px;color:#555;letter-spacing:-0.450px;">Used</div>
<div class="t" style="left:1844.70px;top:771.74px;font-size:10px;color:#555;letter-spacing:-0.225px;">Available</div>
<div class="t" style="left:199.90px;top:683.05px;font-size:14px;color:#3f78d8;letter-spacing:-0.112px;">Purchase Add-ons</div>
<div class="card" style="left:60px;top:822px;width:614px;height:96px"></div>
<div class="t" style="left:86.00px;top:838.73px;font-size:23px;color:#222;letter-spacing:-2.530px;">22</div>
<div class="t" style="left:115.30px;top:842.88px;font-size:15.5px;color:#333;letter-spacing:0.201px;">Remaining</div>
<div class="t" style="left:86.50px;top:880.90px;font-size:13px;color:#333;letter-spacing:-0.083px;">Alert Credits</div>
<div class="t" style="left:454.10px;top:841.40px;font-size:13px;color:#3f78d8;letter-spacing:-0.112px;">Purchase Alert Credits</div>
</body></html>
